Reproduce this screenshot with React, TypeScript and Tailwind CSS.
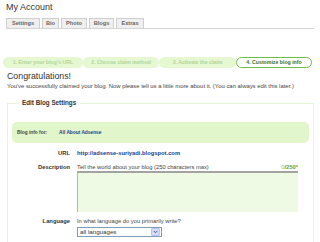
import React from 'react';

const tabs = [
  { label: 'Settings', w: 'w-[34px]' },
  { label: 'Bio', w: 'w-[17px]' },
  { label: 'Photo', w: 'w-[26px]' },
  { label: 'Blogs', w: 'w-[25px]' },
  { label: 'Extras', w: 'w-[28px]' },
];

const steps = [
  { label: "1. Enter your blog's URL", w: 'w-[80px]' },
  { label: '2. Choose claim method', w: 'w-[76px]' },
  { label: '3. Activate the claim', w: 'w-[77px]' },
];

export default function App() {
  return (
    <div className="w-[320px] h-[242px] overflow-hidden bg-white font-['Liberation_Sans',Arial,sans-serif] text-[#333]">
      <h1 className="pl-[6px] pt-[1px] text-[9px] leading-[12px] text-[#333]">My Account</h1>

      {/* tabs */}
      <div className="mt-[5px] ml-[6px] w-[308px] flex gap-[2px] border-b border-[#d4d4d4]">
        {tabs.map((t) => (
          <div
            key={t.label}
            className={`${t.w} h-[10px] flex items-center justify-center bg-[#efefef] border border-b-0 border-[#cfcfcf] text-[5.6px] font-bold text-[#666]`}
          >
            {t.label}
          </div>
        ))}
      </div>

      {/* claim steps */}
      <div className="mt-[28px] ml-[3px] flex">
        {steps.map((s) => (
          <div
            key={s.label}
            className={`${s.w} h-[11px] flex items-center justify-center rounded-full bg-[#e5f8d1] text-[5.2px] font-bold text-[#b3d49b]`}
          >
            {s.label}
          </div>
        ))}
        <div className="w-[76px] h-[11px] flex items-center justify-center rounded-full bg-white border-[1.5px] border-[#6cbf45] text-[5.2px] font-bold text-[#3d6f22]">
          4. Customize blog info
        </div>
      </div>

      <h2 className="pl-[7px] pt-[3px] text-[8.8px] leading-[11px] text-[#333]">Congratulations!</h2>
      <p className="pl-[7px] mt-[1px] text-[5.9px] leading-[7px] text-[#444]">
        You've successfully claimed your blog. Now please tell us a little more about it. (You can always edit this later.)
      </p>

      <fieldset className="mt-[9px] ml-[7px] w-[307px] h-[160px] border-x border-t border-[#e6f4d7] px-[4px]">
        <legend className="ml-[6px] px-[4px] text-[6.3px] leading-[8px] font-bold text-[#333]">Edit Blog Settings</legend>

        <div className="mt-[15px] h-[21px] rounded-[5px] bg-[#e2f6cb] flex items-center pl-[5px] text-[4.8px] font-bold">
          <span className="text-[#444]">Blog info for:</span>
          <span className="ml-[12px] text-[#203e8c]">All About Adsense</span>
        </div>

        <div className="grid grid-cols-[58px_1fr] gap-x-[7px] text-[5.8px] leading-[8px]">
          <div className="mt-[6px] text-right font-bold text-[#333]">URL</div>
          <div className="mt-[6px] font-bold text-[#203e8c]">http://adsense-suriyadi.blogspot.com</div>

          <div className="mt-[6px] text-right font-bold text-[#333]">Description</div>
          <div className="mt-[6px] flex flex-col">
            <div className="w-[221px] flex justify-between text-[#444]">
              <span>Tell the world about your blog (250 characters max)</span>
              <span>
                <span className="text-[#8cc46a]">0</span>
                <span className="font-bold text-[#5ea23a]">/250*</span>
              </span>
            </div>
            <div className="w-[221px] h-[41px] bg-[#eefae3] border-t-2 border-l border-t-[#a3a3a3] border-l-[#b5b5b5]" />
          </div>

          <div className="mt-[5px] text-right font-bold text-[#333]">Language</div>
          <div className="mt-[5px] flex flex-col">
            <div className="text-[#444]">In what language do you primarily write?</div>
            <div className="mt-[2px] w-[85px] h-[10px] flex items-center justify-between border border-[#7f9db9] bg-white">
              <span className="pl-[2px] text-[6.2px] text-[#333]">all languages</span>
              <div className="w-[9px] h-[8px] mr-[1px] flex items-center justify-center rounded-[1px] bg-[#cfdcf7] border border-[#b7c9ee]">
                <svg width="5" height="4" viewBox="0 0 5 4">
                  <path d="M0.8 1 L2.5 2.8 L4.2 1" fill="none" stroke="#4d6185" strokeWidth="1" />
                </svg>
              </div>
            </div>
          </div>
        </div>
      </fieldset>
    </div>
  );
}
